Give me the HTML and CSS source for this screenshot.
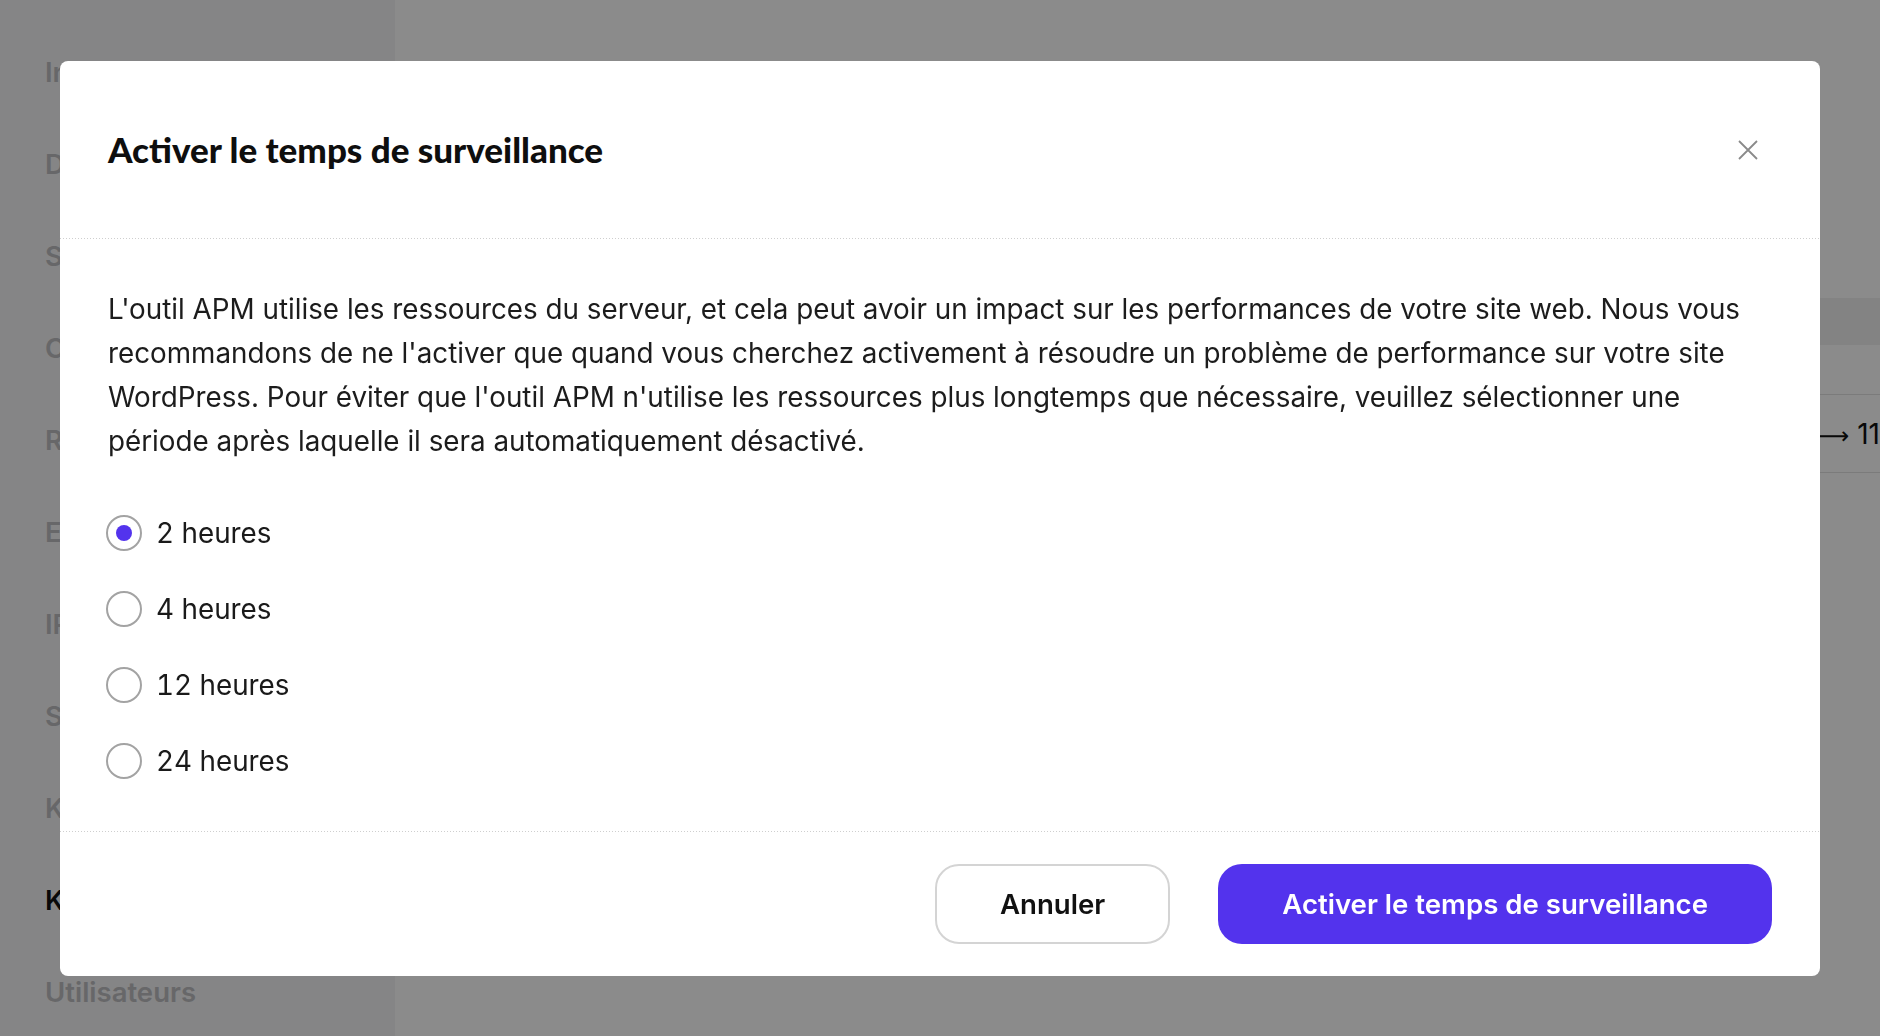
FILE: index.html
```html
<!DOCTYPE html>
<html lang="fr">
<head>
<meta charset="utf-8">
<title>Kinsta APM</title>
<link rel="stylesheet" href="styles.css">
</head>
<body>
<div class="app">
  <aside class="sidebar">
    <nav class="nav">
      <a class="nav-item">Infos</a>
      <a class="nav-item">Domaines</a>
      <a class="nav-item">Sauvegardes</a>
      <a class="nav-item">Cache</a>
      <a class="nav-item">Redirections</a>
      <a class="nav-item">Extensions</a>
      <a class="nav-item">IP Deny</a>
      <a class="nav-item">SFTP/SSH</a>
      <a class="nav-item">Kinsta CDN</a>
      <a class="nav-item nav-item-active">Kinsta APM</a>
      <a class="nav-item">Utilisateurs</a>
    </nav>
  </aside>
  <main class="main">
    <div class="table">
      <div class="table-head"><span>Transaction</span><span>Durée</span></div>
      <div class="table-row"><span></span><span></span></div>
      <div class="table-row table-row-tall"><span>wp-admin/admin-ajax.php</span><span class="time">10:30 <span class="arrow">⟶</span> 11:30</span></div>
    </div>
  </main>
</div>

<div class="overlay">
  <div class="modal" role="dialog">
    <header class="modal-header">
      <h2 class="modal-title">Activer le temps de surveillance</h2>
      <button class="close-btn" aria-label="Fermer">
        <svg width="20" height="20" viewBox="0 0 20 20"><path d="M1 1L19 19M19 1L1 19" stroke="#8a8a8a" stroke-width="1.8" fill="none"/></svg>
      </button>
    </header>
    <div class="modal-body">
      <p class="modal-text">L'outil APM utilise les ressources du serveur, et cela peut avoir un impact sur les performances de votre site web. Nous vous recommandons de ne l'activer que quand vous cherchez activement à résoudre un problème de performance sur votre site WordPress. Pour éviter que l'outil APM n'utilise les ressources plus longtemps que nécessaire, veuillez sélectionner une période après laquelle il sera automatiquement désactivé.</p>
      <div class="options">
        <label class="option"><span class="radio radio-checked"></span><span class="option-label">2 heures</span></label>
        <label class="option"><span class="radio"></span><span class="option-label">4 heures</span></label>
        <label class="option"><span class="radio"></span><span class="option-label">12 heures</span></label>
        <label class="option"><span class="radio"></span><span class="option-label">24 heures</span></label>
      </div>
    </div>
    <footer class="modal-footer">
      <button class="btn btn-secondary">Annuler</button>
      <button class="btn btn-primary">Activer le temps de surveillance</button>
    </footer>
  </div>
</div>
</body>
</html>
```

FILE: styles.css
```css
* { box-sizing: border-box; }

html, body {
  margin: 0;
  padding: 0;
  width: 1880px;
  height: 1036px;
  overflow: hidden;
  font-family: Inter, "Noto Sans", sans-serif;
  color: #1a1a1a;
}

.app {
  display: flex;
  height: 1036px;
}

.sidebar {
  width: 395px;
  flex: none;
  background: #f4f4f6;
}

.nav {
  display: flex;
  flex-direction: column;
  gap: 60px;
  padding: 56px 0 0 45px;
}

.nav-item {
  display: block;
  height: 32px;
  line-height: 32px;
  font-size: 27.5px;
  font-weight: 600;
  color: #bebec0;
  white-space: nowrap;
}

.nav-item-active {
  color: #111;
}

.main {
  flex: 1;
  background: #fff;
  padding: 298px 0 0 45px;
  overflow: hidden;
}

.table {
  width: 1600px;
}

.table-head,
.table-row {
  display: grid;
  grid-template-columns: 1295px 1fr;
  align-items: center;
  font-size: 28px;
}

.table-head {
  height: 47px;
  background: #f1f1f1;
  color: #555;
}

.table-row {
  height: 50px;
  border-bottom: 1px solid #e2e2e2;
}

.table-row-tall {
  height: 78px;
}

.time {
  color: #111;
  white-space: nowrap;
}

.arrow {
  font-family: "DejaVu Sans", sans-serif;
  font-size: 24px;
}

/* Modal */
.overlay {
  position: fixed;
  inset: 0;
  background: rgba(0, 0, 0, 0.455);
  display: flex;
  align-items: center;
  justify-content: center;
}

.modal {
  width: 1760px;
  background: #fff;
  border-radius: 8px;
  display: flex;
  flex-direction: column;
}

.modal-header {
  height: 178px;
  padding: 0 50px 0 48px;
  display: flex;
  align-items: center;
  justify-content: space-between;
  background-image: repeating-linear-gradient(90deg, #cfcfcf 0 1px, transparent 1px 3px);
  background-size: 100% 1px;
  background-position: left bottom;
  background-repeat: no-repeat;
}

.modal-title {
  margin: 0 0 1px 0;
  font-family: Lato, "Noto Sans", sans-serif;
  font-weight: 900;
  font-size: 35px;
  color: #0e0e0e;
}

.close-btn {
  width: 44px;
  height: 44px;
  padding: 0;
  border: 0;
  background: transparent;
  display: flex;
  align-items: center;
  justify-content: center;
}

.modal-body {
  padding: 48px;
}

.modal-text {
  margin: 0;
  font-size: 27.8px;
  line-height: 44px;
  color: #1c1c1c;
}

.options {
  margin-top: 48px;
  display: flex;
  flex-direction: column;
  gap: 32px;
}

.option {
  display: flex;
  align-items: center;
  height: 44px;
  gap: 14px;
}

.radio {
  width: 36px;
  height: 36px;
  border: 2px solid #a3a3a3;
  border-radius: 50%;
  display: flex;
  align-items: center;
  justify-content: center;
  margin-left: -2px;
}

.radio-checked::after {
  content: "";
  width: 16px;
  height: 16px;
  border-radius: 50%;
  background: #5333ed;
}

.option-label {
  font-size: 27.8px;
  color: #1a1a1a;
  font-variant-numeric: tabular-nums;
}

.modal-footer {
  height: 145px;
  padding: 33px 48px 32px 48px;
  display: flex;
  justify-content: flex-end;
  gap: 48px;
  background-image: repeating-linear-gradient(90deg, #cfcfcf 0 1px, transparent 1px 3px);
  background-size: 100% 1px;
  background-position: left top;
  background-repeat: no-repeat;
}

.btn {
  height: 80px;
  padding: 0 64px;
  border-radius: 24px;
  font-family: Inter, "Noto Sans", sans-serif;
  font-size: 27.6px;
  font-weight: 600;
  cursor: pointer;
}

.btn-secondary {
  background: #fff;
  border: 2px solid #d4d4d4;
  color: #111;
  padding: 0 63px;
}

.btn-primary {
  background: #5333ed;
  border: 0;
  color: #fff;
}
```
